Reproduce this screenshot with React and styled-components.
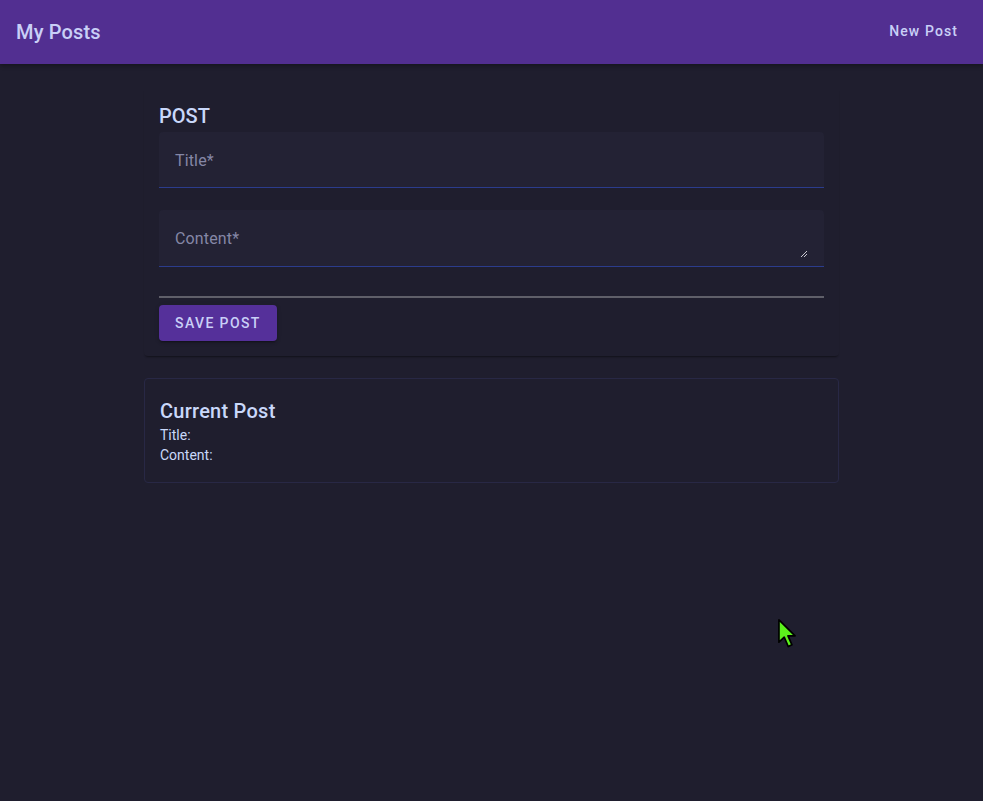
import React from 'react';
import styled, { createGlobalStyle } from 'styled-components';

const GlobalStyle = createGlobalStyle`
  html, body {
    margin: 0;
    padding: 0;
    background: #1f1e2e;
    font-family: Roboto, "Liberation Sans", sans-serif;
  }
  * { box-sizing: border-box; }
`;

const App = () => {
  return (
    <Page>
      <GlobalStyle />
      <TopBar>
        <Brand>My Posts</Brand>
        <NavButton>New Post</NavButton>
      </TopBar>
      <Main>
        <FormCard>
          <SectionTitle>POST</SectionTitle>
          <Field>
            <FieldLabel>Title*</FieldLabel>
          </Field>
          <Field $gap="22px" $height="57px">
            <FieldLabel>Content*</FieldLabel>
            <Resize viewBox="0 0 8 8">
              <path d="M1 7 L7 1 M4 7 L7 4" stroke="#c8c8d0" strokeWidth="1" />
            </Resize>
          </Field>
          <FileLine />
          <SaveButton>Save Post</SaveButton>
        </FormCard>
        <PreviewCard>
          <PreviewTitle>Current Post</PreviewTitle>
          <PreviewLine>Title:</PreviewLine>
          <PreviewLine>Content:</PreviewLine>
        </PreviewCard>
      </Main>
      <Cursor viewBox="0 0 16 25">
        <path
          d="M1.5 1.5 L1.5 19.5 L5.8 15.5 L9 23 L12 21.6 L8.8 14.4 L14.5 14.4 Z"
          fill="#5cf21c"
          stroke="#000"
          strokeWidth="1.4"
          strokeLinejoin="round"
        />
      </Cursor>
    </Page>
  );
};

const Page = styled.div`
  min-height: 801px;
  background: #1f1e2e;
  position: relative;
`;

const TopBar = styled.header`
  height: 64px;
  background: #522f91;
  display: flex;
  align-items: center;
  justify-content: space-between;
  padding: 0 16px;
  box-shadow: 0 2px 4px rgba(0, 0, 0, 0.3);
`;

const Brand = styled.h1`
  margin: 0;
  font-size: 20px;
  font-weight: 500;
  color: #c9cff7;
  letter-spacing: 0.15px;
`;

const NavButton = styled.button`
  background: none;
  border: none;
  font-family: inherit;
  font-size: 14px;
  font-weight: 500;
  letter-spacing: 1.1px;
  color: #c9cff7;
  padding: 6px 8px;
  margin-right: 1px;
  margin-top: -2px;
  cursor: pointer;
`;

const Main = styled.main`
  width: 695px;
  margin: 24px auto 0;
  display: flex;
  flex-direction: column;
  gap: 22px;
`;

const FormCard = styled.section`
  padding: 16px 15px 15px;
  border-radius: 4px;
  box-shadow: 0 2px 2px -1px rgba(0, 0, 0, 0.45);
  display: flex;
  flex-direction: column;
`;

const SectionTitle = styled.h2`
  margin: 0;
  font-size: 20px;
  font-weight: 500;
  line-height: 25px;
  color: #c9d8fa;
`;

const Field = styled.div`
  position: relative;
  height: ${(p) => p.$height || '56px'};
  margin-top: ${(p) => p.$gap || '3px'};
  background: #232234;
  border-radius: 4px 4px 0 0;
  border-bottom: 1px solid #2b3c8c;
  display: flex;
  align-items: center;
  padding: 0 16px;
`;

const FieldLabel = styled.span`
  font-size: 16px;
  color: #8587a6;
  letter-spacing: 0.15px;
  margin-top: 1px;
`;

const Resize = styled.svg`
  position: absolute;
  right: 16px;
  bottom: 8px;
  width: 8px;
  height: 8px;
`;

const FileLine = styled.div`
  margin-top: 29px;
  height: 2px;
  background: #5f5f69;
`;

const SaveButton = styled.button`
  align-self: flex-start;
  margin-top: 7px;
  height: 36px;
  padding: 0 16px;
  border: none;
  border-radius: 4px;
  background: #55309a;
  color: #c9cff7;
  font-family: inherit;
  font-size: 14px;
  font-weight: 500;
  letter-spacing: 1.4px;
  text-transform: uppercase;
  box-shadow: 0 3px 1px -2px rgba(0, 0, 0, 0.2), 0 2px 2px 0 rgba(0, 0, 0, 0.14),
    0 1px 5px 0 rgba(0, 0, 0, 0.12);
  cursor: pointer;
`;

const PreviewCard = styled.section`
  border: 1px solid #282845;
  border-radius: 4px;
  padding: 20px 15px 17px;
  color: #c9d8fa;
`;

const PreviewTitle = styled.h3`
  margin: 0 0 2px;
  font-size: 20px;
  font-weight: 500;
  line-height: 24px;
  letter-spacing: 0.25px;
`;

const PreviewLine = styled.p`
  margin: 0;
  font-size: 14px;
  line-height: 20px;
`;

const Cursor = styled.svg`
  position: absolute;
  left: 777px;
  top: 618px;
  width: 20px;
  height: 31px;
`;

export default App;
